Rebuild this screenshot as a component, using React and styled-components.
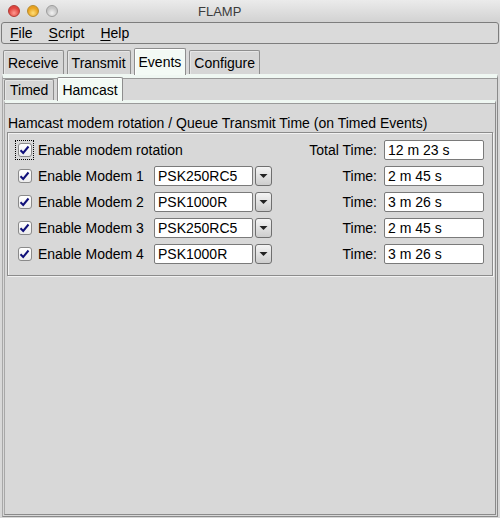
import React from 'react';
import styled, { createGlobalStyle } from 'styled-components';

const GlobalStyle = createGlobalStyle`
  html, body {
    margin: 0;
    padding: 0;
    background: #d8d8d8;
  }
  body {
    font-family: "Liberation Sans", Arial, sans-serif;
    font-size: 14px;
    color: #000;
  }
`;

const Window = styled.div`
  width: 500px;
  height: 518px;
  display: flex;
  flex-direction: column;
  background: #d8d8d8;
  overflow: hidden;
`;

const TitleBar = styled.div`
  height: 22px;
  display: flex;
  align-items: center;
  padding-left: 8px;
  background: linear-gradient(#ebebeb, #d2d2d2);
  flex-shrink: 0;
`;

const Lights = styled.div`
  display: flex;
  gap: 7px;
`;

const Light = styled.span`
  width: 12px;
  height: 12px;
  border-radius: 50%;
  box-sizing: border-box;
  border: 1px solid ${p => p.edge};
  background: radial-gradient(circle at 50% 70%, ${p => p.glow} 0%, ${p => p.color} 60%);
`;

const Title = styled.span`
  margin-left: 140px;
  font-size: 13px;
  color: #3c3c3c;
`;

const MenuBar = styled.div`
  height: 22px;
  margin: 0 1px;
  box-sizing: border-box;
  border: 1px solid #7d7d7d;
  border-radius: 3px;
  background: #dadada;
  display: flex;
  align-items: center;
  padding-left: 8px;
  gap: 16px;
  flex-shrink: 0;
`;

const MenuItem = styled.span`
  font-size: 14px;
  & u { text-decoration-thickness: 1px; text-underline-offset: 2px; }
`;

const TabRow = styled.div`
  display: flex;
  align-items: flex-end;
  gap: ${p => p.gap || 3}px;
  padding-left: ${p => p.inset || 0}px;
  height: ${p => p.height}px;
  flex-shrink: 0;
`;

const Tab = styled.div`
  height: ${p => (p.active ? p.h + 3 : p.h)}px;
  margin-bottom: ${p => (p.active ? -1 : 0)}px;
  box-sizing: border-box;
  padding: 0 ${p => p.pad || 4}px;
  display: flex;
  align-items: center;
  border: 1px solid #8e8e8e;
  border-bottom: none;
  border-radius: 2px 2px 0 0;
  background: ${p => (p.active ? '#f3faf5' : '#d6d6d6')};
  box-shadow: inset 1px 1px 0 ${p => (p.active ? '#ffffff' : '#e6e6e6')};
  position: relative;
  z-index: ${p => (p.active ? 1 : 0)};
  font-size: 14px;
  white-space: nowrap;
`;

const Panel = styled.div`
  flex: 1;
  display: flex;
  flex-direction: column;
  margin: 0 ${p => p.side}px ${p => p.bottom}px;
  border-top: ${p => p.band}px solid #eff7f2;
  border-left: 1px solid #a8a8a8;
  border-right: 1px solid #8a8a8a;
  border-bottom: 1px solid #8a8a8a;
`;

const PanelBody = styled.div`
  flex: 1;
  display: flex;
  flex-direction: column;
  border-top: 1px solid #9a9a9a;
`;

const GroupLabel = styled.div`
  padding: 11px 0 0 3px;
  height: 17px;
  line-height: 17px;
  font-size: 14px;
  white-space: nowrap;
`;

const GroupBox = styled.div`
  margin: 0 2px;
  border: 1px solid #8c8c8c;
  box-shadow: inset 1px 1px 0 #f2f2f2, 1px 1px 0 #f2f2f2;
  padding: 7px 8px 11px 7px;
  display: flex;
  flex-direction: column;
  gap: 6px;
`;

const Row = styled.div`
  display: flex;
  align-items: center;
  height: 20px;
`;

const CheckWrap = styled.span`
  width: 19px;
  height: 20px;
  display: flex;
  align-items: center;
  justify-content: center;
  box-sizing: border-box;
  border: 1px dotted ${p => (p.focus ? '#000' : 'transparent')};
  margin-right: 4px;
`;

const CheckBox = styled.span`
  width: 14px;
  height: 14px;
  box-sizing: border-box;
  border: 1px solid #8a8a8a;
  border-radius: 3px;
  background: linear-gradient(#ffffff, #ececec);
  display: flex;
  align-items: center;
  justify-content: center;
`;

const Label = styled.span`
  width: ${p => (p.w ? `${p.w}px` : 'auto')};
  flex-shrink: 0;
  font-size: 14px;
  white-space: nowrap;
`;

const Spacer = styled.span`
  flex: 1;
`;

const Field = styled.span`
  width: ${p => p.w}px;
  height: 20px;
  box-sizing: border-box;
  border: 1px solid #7a7a7a;
  border-radius: 2px;
  background: #fff;
  display: flex;
  align-items: center;
  padding-left: 3px;
  font-size: 14px;
  margin-left: ${p => p.ml || 0}px;
  flex-shrink: 0;
`;

const DropButton = styled.span`
  width: 17px;
  height: 20px;
  margin-left: 2px;
  box-sizing: border-box;
  border: 1px solid #6f6f6f;
  border-radius: 3px;
  background: linear-gradient(#f4f4f4, #cdcdcd);
  display: flex;
  align-items: center;
  justify-content: center;
`;

const Check = () => (
  <svg width="11" height="10" viewBox="0 0 11 10">
    <path d="M1.5 5.2 L4.2 8 L9.5 1.5" fill="none" stroke="#10107a" strokeWidth="2" />
  </svg>
);

const Arrow = () => (
  <svg width="9" height="6" viewBox="0 0 9 6">
    <path d="M0.5 1 L8.5 1 L4.5 5 Z" fill="#222" />
  </svg>
);

const modems = [
  { name: 'PSK250RC5', time: '2 m 45 s' },
  { name: 'PSK1000R', time: '3 m 26 s' },
  { name: 'PSK250RC5', time: '2 m 45 s' },
  { name: 'PSK1000R', time: '3 m 26 s' },
];

export default function App() {
  return (
    <Window>
      <GlobalStyle />
      <TitleBar>
        <Lights>
          <Light color="#e0443e" glow="#ff9a90" edge="#b03a34" />
          <Light color="#e8a21e" glow="#ffdf7a" edge="#b88a2c" />
          <Light color="#c4c4c4" glow="#f2f2f2" edge="#9c9c9c" />
        </Lights>
        <Title>FLAMP</Title>
      </TitleBar>
      <MenuBar>
        <MenuItem><u>F</u>ile</MenuItem>
        <MenuItem><u>S</u>cript</MenuItem>
        <MenuItem><u>H</u>elp</MenuItem>
      </MenuBar>
      <TabRow height={30} inset={3} gap={3}>
        <Tab h={24} pad={4}>Receive</Tab>
        <Tab h={24} pad={4}>Transmit</Tab>
        <Tab h={24} pad={4} active>Events</Tab>
        <Tab h={24} pad={4}>Configure</Tab>
      </TabRow>
      <Panel side={2} bottom={1} band={4}>
        <PanelBody>
          <TabRow height={21} inset={1} gap={3}>
            <Tab h={21} pad={5}>Timed</Tab>
            <Tab h={21} pad={4} active>Hamcast</Tab>
          </TabRow>
          <Panel side={1} bottom={1} band={3}>
            <PanelBody>
              <GroupLabel>Hamcast modem rotation / Queue Transmit Time (on Timed Events)</GroupLabel>
              <GroupBox>
                <Row>
                  <CheckWrap focus>
                    <CheckBox><Check /></CheckBox>
                  </CheckWrap>
                  <Label>Enable modem rotation</Label>
                  <Spacer />
                  <Label>Total Time:</Label>
                  <Field w={100} ml={7}>12 m 23 s</Field>
                </Row>
                {modems.map((m, i) => (
                  <Row key={i}>
                    <CheckWrap>
                      <CheckBox><Check /></CheckBox>
                    </CheckWrap>
                    <Label w={116}>Enable Modem {i + 1}</Label>
                    <Field w={99}>{m.name}</Field>
                    <DropButton><Arrow /></DropButton>
                    <Spacer />
                    <Label>Time:</Label>
                    <Field w={100} ml={7}>{m.time}</Field>
                  </Row>
                ))}
              </GroupBox>
            </PanelBody>
          </Panel>
        </PanelBody>
      </Panel>
    </Window>
  );
}
